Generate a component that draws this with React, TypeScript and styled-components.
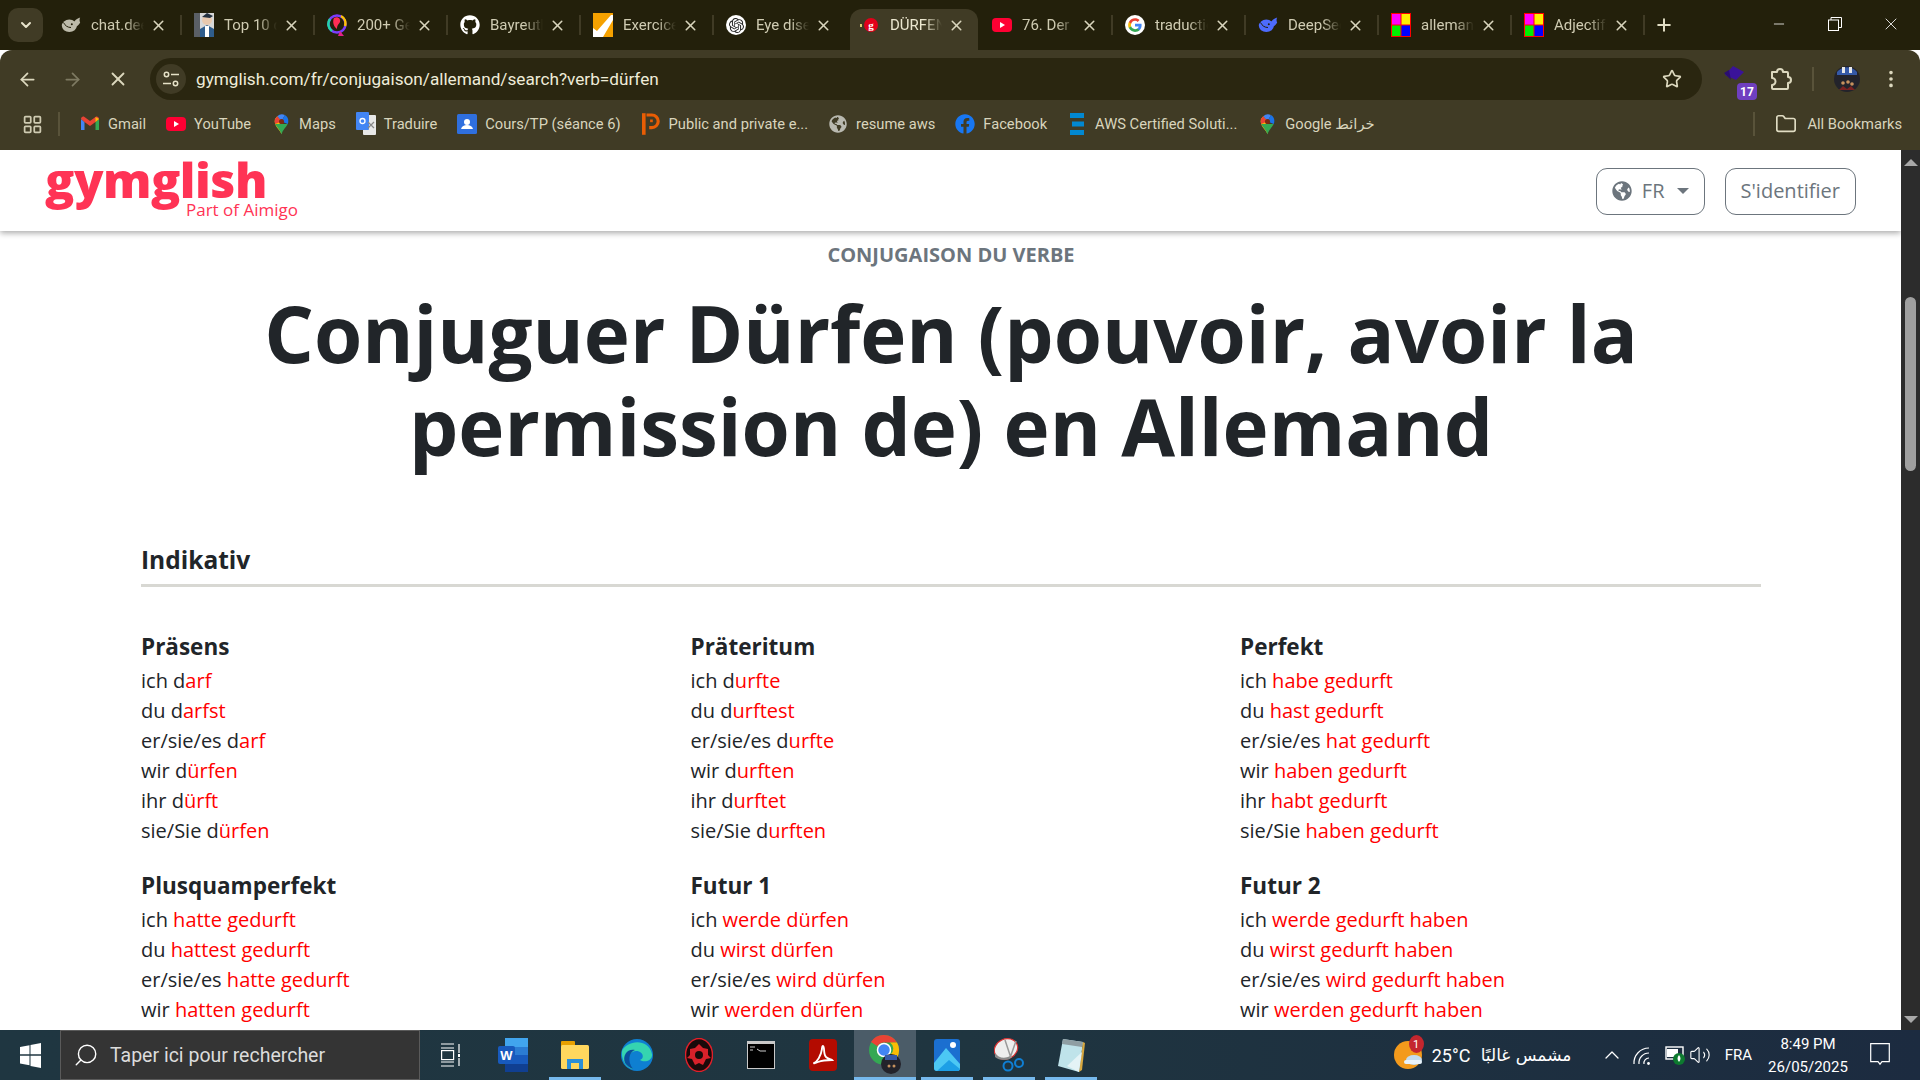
import React from 'react'
import styled, { createGlobalStyle } from 'styled-components'
import { FaGithub, FaFacebook, FaGlobeAmericas } from 'react-icons/fa'
import { SiOpenai } from 'react-icons/si'
import {
  ArrowLeft,
  ArrowRight,
  X,
  Star,
  EllipsisVertical,
  Plus,
  Minus,
  ChevronDown,
  ChevronUp,
  Search,
  Folder,
  LayoutGrid,
  Volume2,
} from 'lucide-react'

const Whale = ({ color }: { color: string }) => (
  <svg width="22" height="20" viewBox="0 0 24 20">
    <ellipse cx="10" cy="11" rx="9" ry="7.5" fill={color} />
    <path d="M15 8c1-3 4-6 8-7-1 2-1 4 0 6-1 2-3 4-5 5z" fill={color} />
    <path d="M3 7c2 4 5 6 9 6" fill="none" stroke="#23200b" strokeWidth="1.2" />
    <circle cx="13" cy="9" r="1.2" fill="#23200b" />
  </svg>
)

const YouTubeIcon = () => (
  <svg width="20" height="20" viewBox="0 0 20 20">
    <rect y="3" width="20" height="14" rx="4" fill="#ff0033" />
    <path d="M8 7l5 3-5 3z" fill="#fff" />
  </svg>
)

const GoogleG = () => (
  <svg width="20" height="20" viewBox="0 0 24 24">
    <circle cx="12" cy="12" r="12" fill="#fff" />
    <g transform="translate(3 3) scale(.75)">
      <path fill="#4285F4" d="M22.56 12.25c0-.78-.07-1.53-.2-2.25H12v4.26h5.92c-.26 1.37-1.04 2.53-2.21 3.31v2.77h3.57c2.08-1.92 3.28-4.74 3.28-8.09z" />
      <path fill="#34A853" d="M12 23c2.97 0 5.46-.98 7.28-2.66l-3.57-2.77c-.98.66-2.23 1.06-3.71 1.06-2.86 0-5.29-1.93-6.16-4.53H2.18v2.84C3.99 20.53 7.7 23 12 23z" />
      <path fill="#FBBC05" d="M5.84 14.09c-.22-.66-.35-1.36-.35-2.09s.13-1.43.35-2.09V7.07H2.18C1.43 8.55 1 10.22 1 12s.43 3.45 1.18 4.93l3.66-2.84z" />
      <path fill="#EA4335" d="M12 5.38c1.62 0 3.06.56 4.21 1.64l3.15-3.15C17.45 2.09 14.97 1 12 1 7.7 1 3.99 3.47 2.18 7.07l3.66 2.84c.87-2.6 3.3-4.53 6.16-4.53z" />
    </g>
  </svg>
)

const ColorSquares = () => (
  <svg width="20" height="24" viewBox="0 0 20 24">
    <rect width="20" height="24" fill="#ff0000" />
    <rect x="1" y="1" width="8.5" height="10.5" fill="#ff00ff" />
    <rect x="10.5" y="1" width="8.5" height="10.5" fill="#ffee00" />
    <rect x="1" y="12.5" width="8.5" height="10.5" fill="#00ee00" />
    <rect x="10.5" y="12.5" width="8.5" height="10.5" fill="#0000ff" />
  </svg>
)

const PortraitIcon = () => (
  <svg width="20" height="24" viewBox="0 0 20 24">
    <rect width="20" height="24" fill="#d8d8d8" />
    <rect width="6" height="24" fill="#5a5f66" />
    <circle cx="13" cy="7" r="5" fill="#e9c9ae" />
    <path d="M8 4l5-4 6 3-3 2z" fill="#23303f" />
    <path d="M6 24v-8l7-4 7 4v8z" fill="#2f5d8c" />
    <path d="M11 24v-11h4v11z" fill="#fff" />
  </svg>
)

const RingIcon = () => (
  <svg width="20" height="24" viewBox="0 0 20 24">
    <circle cx="10" cy="11" r="8.5" fill="none" stroke="#7a3cff" strokeWidth="2.5" />
    <path d="M3 6a8.5 8.5 0 0 0 2 12" fill="none" stroke="#21d4a8" strokeWidth="2.5" />
    <path d="M14 3a8.5 8.5 0 0 1 4 10" fill="none" stroke="#ffc400" strokeWidth="2.5" />
    <path d="M7 5c4-2 7 1 6 4-1 2-3 3-3 7-3-2-5-7-3-11z" fill="#ff2d55" />
    <path d="M13 18l4 5h-6z" fill="#e0218a" />
  </svg>
)

const CheckSquare = () => (
  <svg width="20" height="24" viewBox="0 0 20 24">
    <rect width="20" height="24" fill="#f5a100" />
    <path d="M0 24V15l4 3L18 2h2v5L10 24z" fill="#fff" />
  </svg>
)

const GymglishFav = () => (
  <svg width="20" height="20" viewBox="0 0 20 20">
    <rect x="0" y="9" width="2" height="3" fill="#d8d070" />
    <circle cx="11" cy="10" r="7" fill="#e1001a" />
    <text x="11" y="14" fontSize="11" fontWeight="700" fill="#fff" textAnchor="middle" fontFamily="Liberation Serif, serif">g</text>
  </svg>
)

const GmailIcon = () => (
  <svg width="20" height="20" viewBox="0 0 20 20">
    <path d="M1 5v11h3.5V8z" fill="#4285f4" />
    <path d="M15.5 8v8H19V5z" fill="#34a853" />
    <path d="M1 5c0-2 2-3 3.5-2L10 7l5.5-4C17 2 19 3 19 5l-3.5 3L10 12 4.5 8z" fill="#ea4335" />
    <path d="M15.5 3L19 5l-3.5 3z" fill="#fbbc05" />
  </svg>
)

const MapsIcon = () => (
  <svg width="17" height="22" viewBox="0 0 20 24">
    <path d="M10 24c-1-4-8-9-8-15a8 8 0 0 1 3-6l5 6z" fill="#fbbc05" />
    <path d="M5 3a8 8 0 0 1 9-1.5L10 9z" fill="#4285f4" />
    <path d="M14 1.5A8 8 0 0 1 18 9c0 1-.3 2-.7 3L10 9z" fill="#1a73e8" />
    <path d="M2.5 12L17.3 12c-2 4-6 7-7.3 12-1-4-5.5-8-7.5-12z" fill="#34a853" />
    <path d="M2 9a8 8 0 0 1 3-6l5 6-7.5 3z" fill="#ea4335" />
    <circle cx="10" cy="9" r="3" fill="#7d2a12" />
  </svg>
)

const TranslateIcon = () => (
  <svg width="20" height="24" viewBox="0 0 20 24">
    <rect x="7" y="3" width="13" height="20" rx="1" fill="#e8e8e8" />
    <rect x="0" y="0" width="13" height="18" rx="1" fill="#4285f4" />
    <circle cx="6.5" cy="9" r="2.5" fill="none" stroke="#fff" strokeWidth="1.3" />
    <path d="M12 10l6 6M18 10l-6 6" stroke="#888" strokeWidth="1.2" />
  </svg>
)

const ClassroomIcon = () => (
  <svg width="20" height="20" viewBox="0 0 20 20">
    <rect width="20" height="20" rx="1.5" fill="#2f6fde" />
    <circle cx="10" cy="8" r="3" fill="#fff" />
    <path d="M4 15c1-3 3-4 6-4s5 1 6 4z" fill="#fff" />
  </svg>
)

const PublicIcon = () => (
  <svg width="18" height="22" viewBox="0 0 20 24">
    <rect x="0" y="0" width="4" height="24" fill="#e85d04" />
    <path d="M5 2h6a7 7 0 0 1 0 14H8" fill="none" stroke="#e85d04" strokeWidth="3.5" />
    <rect x="9" y="7" width="3" height="3" fill="#e85d04" />
  </svg>
)

const AwsIcon = () => (
  <svg width="14" height="24" viewBox="0 0 14 24">
    <rect y="1" width="14" height="5" fill="#0288d1" />
    <rect x="2" y="9.5" width="12" height="5" fill="#0288d1" />
    <rect y="18" width="14" height="5" fill="#0288d1" />
  </svg>
)

const PuzzleIcon = () => (
  <svg width="24" height="24" viewBox="0 0 24 24" fill="none" stroke="#dcd8be" strokeWidth="2" strokeLinejoin="round">
    <path d="M4 5h5a3 3 0 0 1 6 0h4a1 1 0 0 1 1 1v4a3 3 0 0 1 0 6v5a1 1 0 0 1-1 1H5a1 1 0 0 1-1-1v-3a3.5 3.5 0 0 0 0-7z" />
  </svg>
)

const WindowsLogo = () => (
  <svg width="21" height="25" viewBox="0 0 21 25">
    <path d="M0 4l9.5-1.7v9H0zM10.5 2.1L21 0v11.3H10.5zM0 12.7h9.5v9.5L0 20.5zM10.5 12.7H21V25l-10.5-2z" fill="#fff" />
  </svg>
)

const TaskViewIcon = () => (
  <svg width="20" height="24" viewBox="0 0 20 24" fill="none" stroke="#fff" strokeWidth="1.2">
    <path d="M0 1h13M0 23h13M0 19h13M0 5h13" />
    <rect x=".6" y="7.6" width="12" height="9" />
    <path d="M18 1v9M18 15v8" />
    <rect x="17" y="11" width="2" height="3" fill="#fff" stroke="none" />
  </svg>
)

const WordIcon = () => (
  <svg width="30" height="34" viewBox="0 0 30 34">
    <rect x="7" y="0" width="23" height="34" rx="2" fill="#2b7cd3" />
    <rect x="7" y="0" width="23" height="9" fill="#41a5ee" />
    <rect x="7" y="17" width="23" height="9" fill="#185abd" />
    <rect x="7" y="26" width="23" height="8" fill="#103f91" />
    <rect x="0" y="8" width="17" height="18" rx="2" fill="#185abd" />
    <text x="8.5" y="22" fontSize="13" fontWeight="700" fill="#fff" textAnchor="middle" fontFamily="Liberation Sans, sans-serif">W</text>
  </svg>
)

const ExplorerIcon = () => (
  <svg width="28" height="28" viewBox="0 0 28 28">
    <rect width="14" height="6" rx="1" fill="#e8a000" />
    <rect y="4" width="28" height="24" rx="1.5" fill="#ffd75e" />
    <rect x="6" y="18" width="16" height="10" fill="#2b8fd8" />
    <rect x="10" y="22" width="8" height="6" fill="#ffd75e" />
  </svg>
)

const EdgeIcon = () => (
  <svg width="32" height="32" viewBox="0 0 32 32">
    <circle cx="16" cy="16" r="16" fill="#0e7fd1" />
    <path d="M1 12C5 2 27-2 31 15c1 7-8 9-12 6 5-2 3-9-4-9C8 12 4 22 12 30 6 29 0 22 1 12z" fill="#35d4b0" />
    <path d="M4 24c-3-8 3-15 10-13-6 2-8 11-2 19-3-1-6-3-8-6z" fill="#0a4f9c" />
  </svg>
)

const DriverIcon = () => (
  <svg width="28" height="34" viewBox="0 0 28 34">
    <ellipse cx="14" cy="17" rx="13.5" ry="16.5" fill="#1a0a0a" stroke="#e0202a" strokeWidth="1.5" />
    <path d="M14 6l4 4 5 1v6l3 3-5 1-3 6-4-2-4 2-3-6-5-1 3-3v-6l5-1z" fill="#d8212a" />
    <circle cx="14" cy="17" r="4" fill="#1a0a0a" />
  </svg>
)

const ConsoleIcon = () => (
  <svg width="28" height="28" viewBox="0 0 28 28">
    <rect width="28" height="28" fill="#c9c9c9" />
    <rect x="1" y="3" width="26" height="24" fill="#000" />
    <path d="M3 6h5M3 9h3M10 8l3 2h6" stroke="#ccc" strokeWidth="1" />
  </svg>
)

const AcrobatIcon = () => (
  <svg width="28" height="32" viewBox="0 0 28 32">
    <rect width="28" height="32" rx="4" fill="#b30b00" />
    <path d="M5 24c3-1 7-7 8-14 0-2 0-3 1-3 2 1 0 8 3 11 2 2 5 2 6 3-3 0-9 0-14 2-3 1-4 2-4 1z" fill="none" stroke="#fff" strokeWidth="1.8" />
  </svg>
)

const ChromeAvatarIcon = () => (
  <svg width="32" height="40" viewBox="0 0 32 40">
    <circle cx="15" cy="15" r="15" fill="#34a853" />
    <path d="M15 0a15 15 0 0 1 13 7.5H15a7.5 7.5 0 0 0-6.5 3.7L2 7a15 15 0 0 1 13-7z" fill="#ea4335" />
    <path d="M28 7.5A15 15 0 0 1 17 30l5-11a7.5 7.5 0 0 0-1-11.5z" fill="#fbbc05" />
    <circle cx="15" cy="15" r="6.5" fill="#4285f4" stroke="#fff" strokeWidth="1.5" />
    <circle cx="22" cy="29" r="10" fill="#23232b" />
    <rect x="16" y="20" width="12" height="5" fill="#3559a8" />
    <circle cx="20" cy="31" r="1.5" fill="#c7915e" />
    <circle cx="25" cy="31" r="1.5" fill="#c7915e" />
  </svg>
)

const PhotosIcon = () => (
  <svg width="26" height="32" viewBox="0 0 26 32">
    <rect width="26" height="32" rx="3" fill="#1b6fd0" />
    <circle cx="19" cy="6" r="3" fill="#fff" />
    <path d="M0 24L12 9l14 16v4a3 3 0 0 1-3 3H3a3 3 0 0 1-3-3z" fill="#4cc8f4" />
    <path d="M3 32l12-11 11 9a3 3 0 0 1-3 2z" fill="#1d9fe6" />
  </svg>
)

const SnipIcon = () => (
  <svg width="30" height="36" viewBox="0 0 30 36">
    <ellipse cx="12" cy="12" rx="12" ry="10" transform="rotate(-25 12 12)" fill="#eee" stroke="#d33" strokeWidth="1.2" />
    <path d="M1 16c3 5 10 6 15 3v3c-5 2-12 1-15-2z" fill="#8a8a8a" />
    <path d="M11 3l6 18M22 4l-6 17" stroke="#999" strokeWidth="1.5" />
    <circle cx="14" cy="29" r="4.5" fill="none" stroke="#0f7fd4" strokeWidth="2" />
    <circle cx="25" cy="26" r="4" fill="none" stroke="#0f7fd4" strokeWidth="2" />
  </svg>
)

const NotepadIcon = () => (
  <svg width="28" height="34" viewBox="0 0 28 34">
    <path d="M6 1l20 3-4 30L1 28z" fill="#bfe3ea" />
    <path d="M6 1l20 3-1 5L5 6z" fill="#8f9ea3" />
    <path d="M22 34l4-30 2 1-3 27z" fill="#d8a840" />
    <path d="M10 28L22 34 25 14z" fill="#e4f3f6" />
  </svg>
)

const WeatherIcon = () => (
  <svg width="28" height="32" viewBox="0 0 28 32">
    <circle cx="14" cy="16" r="14" fill="#f39a1c" />
    <ellipse cx="20" cy="21" rx="8" ry="5" fill="#c4dcef" />
    <rect x="10" y="21" width="18" height="4" rx="2" fill="#e8f2fa" />
  </svg>
)

const WifiIcon = () => (
  <svg width="20" height="22" viewBox="0 0 20 22" fill="none" stroke="#fff" strokeWidth="1.2">
    <path d="M12 20a5 5 0 0 1 5-6" />
    <path d="M7 20a10 10 0 0 1 10-11" />
    <path d="M2 20A15 15 0 0 1 17 4" />
    <circle cx="16.5" cy="19.5" r="1.4" fill="#fff" stroke="none" />
  </svg>
)

const BatteryIcon = () => (
  <svg width="20" height="22" viewBox="0 0 20 22">
    <rect x="1" y="3" width="17" height="12" fill="none" stroke="#fff" strokeWidth="1.4" />
    <rect x="2" y="5" width="11" height="8" fill="#fff" />
    <circle cx="14" cy="15" r="6" fill="#0d7a2f" />
    <path d="M14 11c2 2 2 5 0 7-2-2-2-5 0-7z" fill="#fff" />
  </svg>
)

const NotifyIcon = () => (
  <svg width="20" height="24" viewBox="0 0 20 24">
    <path d="M.7.7h18.6v18H12l-2 2.5-2-2.5H.7z" fill="none" stroke="#fff" strokeWidth="1.2" />
  </svg>
)

const RestoreIcon = () => (
  <svg width="14" height="14" viewBox="0 0 14 14" fill="none" stroke="#fff" strokeWidth="1">
    <rect x=".5" y="3" width="10" height="10.5" />
    <path d="M3 3V.5h10.5v10H11" />
  </svg>
)

const ExtensionBadge = () => (
  <svg width="30" height="30" viewBox="0 0 30 30">
    <path d="M12 2l11 6-8 8-11-5z" fill="#3a1399" />
    <path d="M3 9l5-3 2 10z" fill="#2a0e70" />
  </svg>
)

const AvatarPhoto = () => (
  <svg width="26" height="26" viewBox="0 0 26 26">
    <circle cx="13" cy="13" r="13" fill="#23232b" />
    <path d="M3 6a13 13 0 0 1 20 0v3H3z" fill="#3559a8" />
    <rect x="8" y="1" width="3" height="6" fill="#e8e8e8" />
    <rect x="15" y="1" width="3" height="6" fill="#e8e8e8" />
    <circle cx="9" cy="17" r="1.8" fill="#c7915e" />
    <circle cx="14" cy="16" r="1.8" fill="#c7915e" />
    <circle cx="18" cy="18" r="1.8" fill="#c7915e" />
    <path d="M5 24l4-4 4 3 4-3 4 4z" fill="#7a2222" />
  </svg>
)

function OpenAiFav() {
  return (
    <WhiteDisc>
      <SiOpenai size={15} color="#222" />
    </WhiteDisc>
  )
}

const tabs = [
  { title: 'chat.deepseek', icon: <Whale color="#bdbbaa" /> },
  { title: 'Top 10 des', icon: <PortraitIcon /> },
  { title: '200+ German', icon: <RingIcon /> },
  { title: 'Bayreuth', icon: <FaGithub size={20} color="#fff" /> },
  { title: 'Exercices', icon: <CheckSquare /> },
  { title: 'Eye disease', icon: <OpenAiFav /> },
  { title: 'DÜRFEN', icon: <GymglishFav />, active: true },
  { title: '76. Der', icon: <YouTubeIcon /> },
  { title: 'traduction', icon: <GoogleG /> },
  { title: 'DeepSeek', icon: <Whale color="#4d6bfe" /> },
  { title: 'allemand', icon: <ColorSquares /> },
  { title: 'Adjectifs', icon: <ColorSquares /> },
]

const bookmarks = [
  { label: 'Gmail', icon: <GmailIcon /> },
  { label: 'YouTube', icon: <YouTubeIcon /> },
  { label: 'Maps', icon: <MapsIcon /> },
  { label: 'Traduire', icon: <TranslateIcon /> },
  { label: 'Cours/TP (séance 6)', icon: <ClassroomIcon /> },
  { label: 'Public and private e...', icon: <PublicIcon /> },
  { label: 'resume aws', icon: <FaGlobeAmericas size={18} color="#b9b9b0" /> },
  { label: 'Facebook', icon: <FaFacebook size={20} color="#1877f2" /> },
  { label: 'AWS Certified Soluti...', icon: <AwsIcon /> },
  { label: 'Google خرائط', icon: <MapsIcon /> },
]

const taskApps = [
  { icon: <WordIcon /> },
  { icon: <ExplorerIcon />, open: true },
  { icon: <EdgeIcon /> },
  { icon: <DriverIcon /> },
  { icon: <ConsoleIcon /> },
  { icon: <AcrobatIcon /> },
  { icon: <ChromeAvatarIcon />, open: true, active: true },
  { icon: <PhotosIcon />, open: true },
  { icon: <SnipIcon />, open: true },
  { icon: <NotepadIcon />, open: true },
]

const pronouns = ['ich', 'du', 'er/sie/es', 'wir', 'ihr', 'sie/Sie']

// the second row of tenses runs under the taskbar, only four lines are on screen
const tenses: { name: string; forms: [string, string][] }[] = [
  {
    name: 'Präsens',
    forms: [['d', 'arf'], ['d', 'arfst'], ['d', 'arf'], ['d', 'ürfen'], ['d', 'ürft'], ['d', 'ürfen']],
  },
  {
    name: 'Präteritum',
    forms: [['d', 'urfte'], ['d', 'urftest'], ['d', 'urfte'], ['d', 'urften'], ['d', 'urftet'], ['d', 'urften']],
  },
  {
    name: 'Perfekt',
    forms: [['', 'habe gedurft'], ['', 'hast gedurft'], ['', 'hat gedurft'], ['', 'haben gedurft'], ['', 'habt gedurft'], ['', 'haben gedurft']],
  },
  {
    name: 'Plusquamperfekt',
    forms: [['', 'hatte gedurft'], ['', 'hattest gedurft'], ['', 'hatte gedurft'], ['', 'hatten gedurft']],
  },
  {
    name: 'Futur 1',
    forms: [['', 'werde dürfen'], ['', 'wirst dürfen'], ['', 'wird dürfen'], ['', 'werden dürfen']],
  },
  {
    name: 'Futur 2',
    forms: [['', 'werde gedurft haben'], ['', 'wirst gedurft haben'], ['', 'wird gedurft haben'], ['', 'werden gedurft haben']],
  },
]

const App = () => {
  return (
    <Screen>
      <GlobalStyle />
      <TabStrip>
        <TabSearch>
          <ChevronDown size={16} strokeWidth={3} />
        </TabSearch>
        {tabs.map((t, i) => (
          <Tab key={i} $active={!!t.active} $noSep={!!t.active || !!tabs[i + 1]?.active}>
            <FavSlot>{t.icon}</FavSlot>
            <TabTitle $active={!!t.active}>{t.title}</TabTitle>
            <X size={17} strokeWidth={2.2} color="#d9d5bd" />
          </Tab>
        ))}
        <NewTab>
          <Plus size={20} strokeWidth={2.4} />
        </NewTab>
        <WindowControls>
          <WindowBtn><Minus size={16} strokeWidth={1.2} /></WindowBtn>
          <WindowBtn><RestoreIcon /></WindowBtn>
          <WindowBtn><X size={20} strokeWidth={1} /></WindowBtn>
        </WindowControls>
      </TabStrip>

      <Toolbar>
        <NavBtn><ArrowLeft size={21} /></NavBtn>
        <NavBtn $dim><ArrowRight size={21} /></NavBtn>
        <NavBtn><X size={22} /></NavBtn>
        <AddressBar>
          <SiteChip>
            <svg width="16" height="16" viewBox="0 0 16 16" fill="none" stroke="#e6e2c8" strokeWidth="1.5">
              <circle cx="3.5" cy="3.5" r="2.2" />
              <path d="M8 3.5h8M0 12.5h8" />
              <circle cx="12.5" cy="12.5" r="2.2" />
            </svg>
          </SiteChip>
          <UrlText>gymglish.com/fr/conjugaison/allemand/search?verb=dürfen</UrlText>
          <Star size={20} color="#dcd8be" strokeWidth={2} />
        </AddressBar>
        <ExtSlot>
          <ExtensionBadge />
          <ExtCount>17</ExtCount>
        </ExtSlot>
        <ToolIcon><PuzzleIcon /></ToolIcon>
        <ToolDivider />
        <ToolIcon><AvatarPhoto /></ToolIcon>
        <ToolIcon><EllipsisVertical size={22} color="#dcd8be" /></ToolIcon>
      </Toolbar>

      <BookmarkBar>
        <AppsSlot><LayoutGrid size={21} color="#cfcbb2" strokeWidth={2} /></AppsSlot>
        <BarDivider />
        {bookmarks.map((b) => (
          <Bookmark key={b.label}>
            <BookmarkIcon>{b.icon}</BookmarkIcon>
            <span>{b.label}</span>
          </Bookmark>
        ))}
        <AllBookmarks>
          <BarDivider />
          <Folder size={22} color="#e1ddc4" strokeWidth={1.8} />
          <span>All Bookmarks</span>
        </AllBookmarks>
      </BookmarkBar>

      <PageRow>
        <Page>
          <SiteHeader>
            <LogoBlock>
              <LogoText>gymglish</LogoText>
              <LogoSub>Part of Aimigo</LogoSub>
            </LogoBlock>
            <HeaderActions>
              <OutlineButton>
                <FaGlobeAmericas size={20} />
                FR
                <Caret />
              </OutlineButton>
              <OutlineButton>S'identifier</OutlineButton>
            </HeaderActions>
          </SiteHeader>
          <Content>
            <Kicker>CONJUGAISON DU VERBE</Kicker>
            <Title>
              Conjuguer Dürfen (pouvoir, avoir la
              <br />
              permission de) en Allemand
            </Title>
            <Mood>Indikativ</Mood>
            <TenseGrid>
              {tenses.map((t) => (
                <div key={t.name}>
                  <TenseName>{t.name}</TenseName>
                  {t.forms.map(([stem, ending], i) => (
                    <FormRow key={i}>
                      {pronouns[i]} {stem}
                      <Ending>{ending}</Ending>
                    </FormRow>
                  ))}
                </div>
              ))}
            </TenseGrid>
          </Content>
        </Page>
        <ScrollBar>
          <ScrollArrow />
          <ScrollThumb />
          <ScrollArrow $down />
        </ScrollBar>
      </PageRow>

      <Taskbar>
        <StartBtn><WindowsLogo /></StartBtn>
        <SearchBox>
          <MirroredSearch size={26} strokeWidth={1.3} color="#fff" />
          <span>Taper ici pour rechercher</span>
        </SearchBox>
        <TaskViewSlot><TaskViewIcon /></TaskViewSlot>
        {taskApps.map((a, i) => (
          <TaskApp key={i} $open={!!a.open} $active={!!a.active}>
            {a.icon}
          </TaskApp>
        ))}
        <Tray>
          <WeatherSlot>
            <WeatherIcon />
            <WeatherBadge>1</WeatherBadge>
          </WeatherSlot>
          <WeatherText>25°C</WeatherText>
          <WeatherArabic>مشمس غالبًا</WeatherArabic>
          <ChevronUp size={24} strokeWidth={1.3} />
          <TrayIcon $gap={8}><WifiIcon /></TrayIcon>
          <TrayIcon $gap={13}><BatteryIcon /></TrayIcon>
          <TrayIcon $gap={4}><Volume2 size={22} strokeWidth={1.2} /></TrayIcon>
          <Lang>FRA</Lang>
          <Clock>
            <span>8:49 PM</span>
            <span>26/05/2025</span>
          </Clock>
          <NotifySlot><NotifyIcon /></NotifySlot>
        </Tray>
      </Taskbar>
    </Screen>
  )
}

const GlobalStyle = createGlobalStyle`
  html, body {
    margin: 0;
    padding: 0;
    overflow: hidden;
    background: #fff;
  }
`

const uiFont = `Roboto, "Noto Sans", "DejaVu Sans", sans-serif`
const pageFont = `"Open Sans", "Noto Sans", sans-serif`

const Screen = styled.div`
  width: 1920px;
  height: 1080px;
  display: flex;
  flex-direction: column;
  overflow: hidden;
  font-family: ${uiFont};
`

const TabStrip = styled.div`
  height: 50px;
  display: flex;
  align-items: flex-end;
  background: #23200b;
  padding-left: 8px;
  flex-shrink: 0;
`

const TabSearch = styled.div`
  width: 35px;
  height: 34px;
  margin: 0 5px 8px 0;
  border-radius: 10px;
  background: #403b25;
  color: #e8e4cc;
  display: flex;
  align-items: center;
  justify-content: center;
`

const Tab = styled.div<{ $active: boolean; $noSep: boolean }>`
  position: relative;
  width: ${(p) => (p.$active ? 128 : 133)}px;
  height: 41px;
  box-sizing: border-box;
  display: flex;
  align-items: center;
  margin-left: ${(p) => (p.$active ? 4 : 0)}px;
  margin-right: ${(p) => (p.$active ? 1 : 0)}px;
  padding: 0 ${(p) => (p.$active ? 13 : 14)}px 9px ${(p) => (p.$active ? 10 : 13)}px;
  border-radius: 12px 12px 0 0;
  background: ${(p) => (p.$active ? '#403b25' : 'transparent')};
  &::after {
    content: '';
    position: absolute;
    right: -1px;
    top: 6px;
    width: 2px;
    height: 20px;
    background: ${(p) => (p.$noSep ? 'transparent' : '#403b25')};
  }
`

const FavSlot = styled.div`
  width: 20px;
  height: 24px;
  display: flex;
  align-items: center;
  justify-content: center;
  flex-shrink: 0;
`

const WhiteDisc = styled.div`
  width: 20px;
  height: 20px;
  border-radius: 50%;
  background: #fff;
  display: flex;
  align-items: center;
  justify-content: center;
`

const TabTitle = styled.div<{ $active: boolean }>`
  flex: 1;
  margin: 0 6px 0 10px;
  font-size: 15px;
  white-space: nowrap;
  overflow: hidden;
  color: ${(p) => (p.$active ? '#ece8d0' : '#cfcbb2')};
  -webkit-mask-image: linear-gradient(90deg, #000 65%, transparent 100%);
  mask-image: linear-gradient(90deg, #000 65%, transparent 100%);
`

const NewTab = styled.div`
  width: 40px;
  height: 34px;
  margin: 0 0 8px 0;
  color: #e1ddc4;
  display: flex;
  align-items: center;
  justify-content: center;
`

const WindowControls = styled.div`
  margin-left: auto;
  align-self: stretch;
  display: flex;
  padding-right: 1px;
`

const WindowBtn = styled.div`
  width: 56px;
  display: flex;
  align-items: center;
  justify-content: center;
  color: #fff;
  padding-bottom: 2px;
`

const Toolbar = styled.div`
  height: 56px;
  box-sizing: border-box;
  display: flex;
  align-items: center;
  padding: 8px 0 6px 5px;
  background: #403b25;
  border-radius: 12px 12px 0 0;
  flex-shrink: 0;
`

const NavBtn = styled.div<{ $dim?: boolean }>`
  width: 45px;
  height: 40px;
  display: flex;
  align-items: center;
  justify-content: center;
  color: ${(p) => (p.$dim ? '#7e7a62' : '#dcd8be')};
`

const AddressBar = styled.div`
  width: 1552px;
  height: 42px;
  margin-left: 10px;
  border-radius: 21px;
  background: #2a2610;
  display: flex;
  align-items: center;
  padding: 0 20px 0 6px;
  box-sizing: border-box;
  flex-shrink: 0;
`

const SiteChip = styled.div`
  width: 30px;
  height: 30px;
  border-radius: 50%;
  background: #403b25;
  display: flex;
  align-items: center;
  justify-content: center;
  margin-right: 10px;
`

const UrlText = styled.div`
  flex: 1;
  font-size: 17.2px;
  color: #efecd9;
  white-space: nowrap;
`

const ExtSlot = styled.div`
  position: relative;
  width: 44px;
  height: 36px;
  margin-left: 12px;
  display: flex;
  align-items: center;
  justify-content: center;
`

const ExtCount = styled.div`
  position: absolute;
  right: 1px;
  bottom: -3px;
  width: 20px;
  height: 17px;
  border-radius: 4px;
  background: #6f3fc0;
  color: #fff;
  font-size: 12px;
  font-weight: 700;
  display: flex;
  align-items: center;
  justify-content: center;
`

const ToolIcon = styled.div`
  width: 44px;
  height: 36px;
  display: flex;
  align-items: center;
  justify-content: center;
  flex-shrink: 0;
`

const ToolDivider = styled.div`
  width: 2px;
  height: 24px;
  margin: 0 11px 0 10px;
  background: #59533a;
`

const BookmarkBar = styled.div`
  height: 44px;
  display: flex;
  align-items: center;
  padding: 0 18px 8px 22px;
  box-sizing: border-box;
  background: #403b25;
  flex-shrink: 0;
`

const AppsSlot = styled.div`
  width: 21px;
  display: flex;
  margin-right: 15px;
`

const BarDivider = styled.div`
  width: 2px;
  height: 24px;
  background: #59533a;
`

const Bookmark = styled.div`
  display: flex;
  align-items: center;
  gap: 8px;
  margin-left: 20px;
  font-size: 14.7px;
  color: #d9d5bd;
  white-space: nowrap;
  svg {
    flex-shrink: 0;
  }
`

const BookmarkIcon = styled.div`
  width: 20px;
  display: flex;
  align-items: center;
  justify-content: center;
`

const AllBookmarks = styled(Bookmark)`
  margin-left: auto;
  gap: 10px;
  & > div {
    margin-right: 10px;
  }
`

const PageRow = styled.div`
  flex: 1;
  display: flex;
  min-height: 0;
`

const Page = styled.div`
  flex: 1;
  min-width: 0;
  display: flex;
  flex-direction: column;
  background: #fff;
  overflow: hidden;
`

const SiteHeader = styled.header`
  position: relative;
  z-index: 2;
  height: 81px;
  box-sizing: border-box;
  display: flex;
  align-items: center;
  justify-content: space-between;
  padding: 0 45px;
  background: #fff;
  box-shadow: 0 2px 6px rgba(0, 0, 0, 0.35);
  flex-shrink: 0;
`

const LogoBlock = styled.div`
  display: flex;
  flex-direction: column;
  width: 255px;
  margin-bottom: 7px;
`

const LogoText = styled.div`
  font-family: ${pageFont};
  font-size: 48.5px;
  font-weight: 800;
  line-height: 50px;
  letter-spacing: -0.5px;
  color: #ff3355;
`

const LogoSub = styled.div`
  font-family: ${pageFont};
  font-size: 17px;
  line-height: 20px;
  margin: -4px 0 0 141px;
  color: #ff3355;
  white-space: nowrap;
`

const HeaderActions = styled.div`
  display: flex;
  gap: 20px;
  margin-top: 2px;
`

const OutlineButton = styled.div`
  height: 47px;
  box-sizing: border-box;
  padding: 0 15px 2px;
  display: flex;
  align-items: center;
  gap: 10px;
  border: 1px solid #6c757d;
  border-radius: 11px;
  font-family: ${pageFont};
  font-size: 20px;
  color: #6c757d;
`

const Caret = styled.span`
  width: 0;
  height: 0;
  margin-left: 2px;
  border-left: 6px solid transparent;
  border-right: 6px solid transparent;
  border-top: 6px solid #6c757d;
`

const Content = styled.main`
  flex: 1;
  min-height: 0;
  overflow: hidden;
  padding: 9px 140px 0 141px;
  font-family: ${pageFont};
  color: #212529;
`

const Kicker = styled.div`
  text-align: center;
  font-size: 20px;
  font-weight: 700;
  line-height: 30px;
  color: #6c757d;
`

const Title = styled.h1`
  margin: 17px 0 0;
  text-align: center;
  font-size: 78px;
  font-weight: 700;
  line-height: 93px;
  white-space: nowrap;
`

const Mood = styled.h2`
  margin: 69px 0 0;
  padding-bottom: 6px;
  font-size: 24.5px;
  font-weight: 700;
  line-height: 36px;
  border-bottom: 3px solid #d8d8d3;
`

const TenseGrid = styled.div`
  display: grid;
  grid-template-columns: repeat(3, 549.5px);
  row-gap: 23px;
  margin-top: 43px;
`

const TenseName = styled.div`
  font-size: 22.5px;
  font-weight: 700;
  line-height: 33px;
  margin-bottom: 3px;
`

const FormRow = styled.div`
  font-size: 20px;
  line-height: 30px;
`

const Ending = styled.span`
  color: #f00;
`

const ScrollBar = styled.aside`
  width: 19px;
  background: #2c2c2c;
  display: flex;
  flex-direction: column;
  align-items: center;
  flex-shrink: 0;
`

const ScrollArrow = styled.div<{ $down?: boolean }>`
  width: 0;
  height: 0;
  border-left: 7px solid transparent;
  border-right: 7px solid transparent;
  ${(p) =>
    p.$down
      ? 'border-top: 7px solid #a8a8a8; margin: auto 0 7px;'
      : 'border-bottom: 7px solid #a8a8a8; margin-top: 9px;'}
`

const ScrollThumb = styled.div`
  width: 11px;
  height: 174px;
  margin-top: 131px;
  border-radius: 6px;
  background: #9f9f9f;
`

const Taskbar = styled.footer`
  height: 50px;
  display: flex;
  align-items: stretch;
  background: linear-gradient(90deg, #1f3641 0%, #1f3540 50%, #1c2b40 100%);
  color: #fff;
  flex-shrink: 0;
`

const StartBtn = styled.div`
  width: 60px;
  display: flex;
  align-items: center;
  justify-content: center;
`

const SearchBox = styled.div`
  width: 360px;
  box-sizing: border-box;
  display: flex;
  align-items: center;
  gap: 11px;
  padding-left: 12px;
  background: #343434;
  border: 1px solid #5a5a5a;
  font-size: 19.5px;
  color: #dcdcdc;
`

const MirroredSearch = styled(Search)`
  transform: scaleX(-1);
`

const TaskViewSlot = styled.div`
  width: 62px;
  display: flex;
  align-items: center;
  justify-content: center;
`

const TaskApp = styled.div<{ $open: boolean; $active: boolean }>`
  position: relative;
  width: 62px;
  display: flex;
  align-items: center;
  justify-content: center;
  background: ${(p) => (p.$active ? '#4b5c68' : 'transparent')};
  &::after {
    content: '';
    position: absolute;
    left: ${(p) => (p.$active ? 0 : 5)}px;
    right: ${(p) => (p.$active ? 0 : 5)}px;
    bottom: 0;
    height: 3px;
    background: ${(p) => (p.$open ? '#76b9ed' : 'transparent')};
  }
`

const Tray = styled.div`
  margin-left: auto;
  display: flex;
  align-items: center;
  font-size: 17px;
`

const WeatherSlot = styled.div`
  position: relative;
  width: 28px;
  display: flex;
`

const WeatherBadge = styled.div`
  position: absolute;
  top: -4px;
  right: -2px;
  width: 15px;
  height: 18px;
  border-radius: 50%;
  background: #c4262e;
  font-size: 11px;
  display: flex;
  align-items: center;
  justify-content: center;
`

const WeatherText = styled.div`
  width: 38px;
  margin: 0 11px 0 10px;
  font-size: 18px;
  white-space: nowrap;
`

const WeatherArabic = styled.div`
  width: 92px;
  margin-right: 27px;
  font-size: 17px;
  white-space: nowrap;
  font-family: "DejaVu Sans", "Noto Sans", sans-serif;
`

const TrayIcon = styled.div<{ $gap: number }>`
  margin-left: ${(p) => p.$gap}px;
  display: flex;
`

const Lang = styled.div`
  margin-left: 14px;
  font-size: 15px;
`

const Clock = styled.div`
  width: 90px;
  margin-left: 11px;
  display: flex;
  flex-direction: column;
  align-items: center;
  gap: 3px;
  font-size: 15px;
  line-height: 20px;
`

const NotifySlot = styled.div`
  width: 67px;
  padding-left: 17px;
  box-sizing: border-box;
  display: flex;
`

export default App
